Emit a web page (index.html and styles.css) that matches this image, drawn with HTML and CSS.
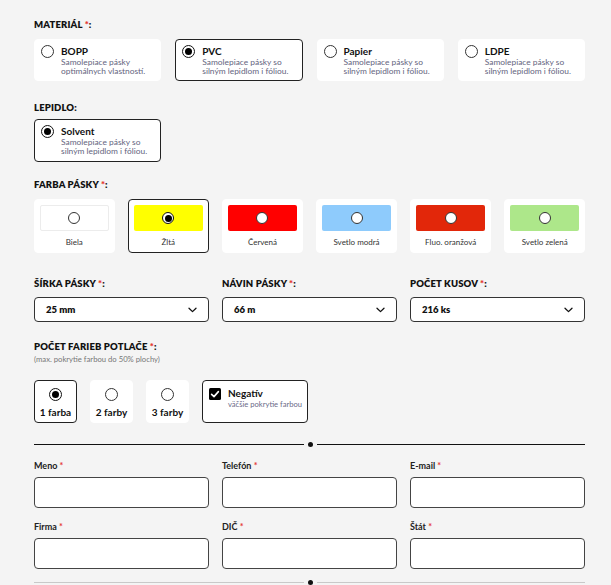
FILE: index.html
```html
<!DOCTYPE html>
<html lang="sk">
<head>
<meta charset="utf-8">
<title>Konfigurátor</title>
<link rel="stylesheet" href="styles.css">
</head>
<body>
<main class="page">
  <section class="group g-material">
    <div class="label">MATERIÁL <span class="req">*</span>:</div>
    <div class="grid4">
      <div class="opt"><span class="radio"></span><div class="opt-text"><div class="opt-title">BOPP</div><div class="opt-desc">Samolepiace pásky<br>optimálnych vlastností.</div></div></div>
      <div class="opt sel"><span class="radio on"></span><div class="opt-text"><div class="opt-title">PVC</div><div class="opt-desc">Samolepiace pásky so<br>silným lepidlom i fóliou.</div></div></div>
      <div class="opt"><span class="radio"></span><div class="opt-text"><div class="opt-title">Papier</div><div class="opt-desc">Samolepiace pásky so<br>silným lepidlom i fóliou.</div></div></div>
      <div class="opt"><span class="radio"></span><div class="opt-text"><div class="opt-title">LDPE</div><div class="opt-desc">Samolepiace pásky so<br>silným lepidlom i fóliou.</div></div></div>
    </div>
  </section>

  <section class="group g-lepidlo">
    <div class="label">LEPIDLO:</div>
    <div class="grid4">
      <div class="opt sel tall"><span class="radio on"></span><div class="opt-text"><div class="opt-title">Solvent</div><div class="opt-desc">Samolepiace pásky so<br>silným lepidlom i fóliou.</div></div></div>
    </div>
  </section>

  <section class="group g-farba">
    <div class="label">FARBA PÁSKY <span class="req">*</span>:</div>
    <div class="grid6">
      <div class="color"><div class="swatch c-white"><span class="radio"></span></div><div class="color-name">Biela</div></div>
      <div class="color sel"><div class="swatch c-yellow"><span class="radio on"></span></div><div class="color-name">Žltá</div></div>
      <div class="color"><div class="swatch c-red"><span class="radio"></span></div><div class="color-name">Červená</div></div>
      <div class="color"><div class="swatch c-blue"><span class="radio"></span></div><div class="color-name">Svetlo modrá</div></div>
      <div class="color"><div class="swatch c-orange"><span class="radio"></span></div><div class="color-name">Fluo. oranžová</div></div>
      <div class="color"><div class="swatch c-green"><span class="radio"></span></div><div class="color-name">Svetlo zelená</div></div>
    </div>
  </section>

  <section class="group g-selects">
    <div class="grid3">
      <div class="field">
        <div class="label">ŠÍRKA PÁSKY <span class="req">*</span>:</div>
        <div class="select"><span>25 mm</span><svg class="chev" viewBox="0 0 9 6" width="9" height="6"><path d="M1 1.2 L4.5 4.6 L8 1.2" fill="none" stroke="#111" stroke-width="1.3" stroke-linecap="round" stroke-linejoin="round"/></svg></div>
      </div>
      <div class="field">
        <div class="label">NÁVIN PÁSKY <span class="req">*</span>:</div>
        <div class="select"><span>66 m</span><svg class="chev" viewBox="0 0 9 6" width="9" height="6"><path d="M1 1.2 L4.5 4.6 L8 1.2" fill="none" stroke="#111" stroke-width="1.3" stroke-linecap="round" stroke-linejoin="round"/></svg></div>
      </div>
      <div class="field">
        <div class="label">POČET KUSOV <span class="req">*</span>:</div>
        <div class="select"><span>216 ks</span><svg class="chev" viewBox="0 0 9 6" width="9" height="6"><path d="M1 1.2 L4.5 4.6 L8 1.2" fill="none" stroke="#111" stroke-width="1.3" stroke-linecap="round" stroke-linejoin="round"/></svg></div>
      </div>
    </div>
  </section>

  <section class="group g-pocet">
    <div class="label">POČET FARIEB POTLAČE <span class="req">*</span>:</div>
    <div class="sublabel">(max. pokrytie farbou do 50% plochy)</div>
    <div class="counts">
      <div class="count sel"><span class="radio on"></span><span class="count-name">1 farba</span></div>
      <div class="count"><span class="radio"></span><span class="count-name">2 farby</span></div>
      <div class="count"><span class="radio"></span><span class="count-name">3 farby</span></div>
      <div class="neg sel">
        <span class="check"><svg viewBox="0 0 12 12" width="12" height="12"><path d="M2.6 6.3 L5 8.6 L9.4 3.6" fill="none" stroke="#fff" stroke-width="1.6" stroke-linecap="round" stroke-linejoin="round"/></svg></span>
        <div class="opt-text"><div class="opt-title">Negatív</div><div class="opt-desc">väčšie pokrytie farbou</div></div>
      </div>
    </div>
  </section>

  <div class="divider"><span class="dot"></span></div>

  <section class="contact grid3">
    <div class="field"><div class="flabel">Meno <span class="req">*</span></div><div class="input"></div></div>
    <div class="field"><div class="flabel">Telefón <span class="req">*</span></div><div class="input"></div></div>
    <div class="field"><div class="flabel">E-mail <span class="req">*</span></div><div class="input"></div></div>
    <div class="field"><div class="flabel">Firma <span class="req">*</span></div><div class="input"></div></div>
    <div class="field"><div class="flabel">DIČ <span class="req">*</span></div><div class="input"></div></div>
    <div class="field"><div class="flabel">Štát <span class="req">*</span></div><div class="input"></div></div>
  </section>

  <div class="divider light"><span class="dot"></span></div>
</main>
</body>
</html>
```
FILE: styles.css
```css
* { box-sizing: border-box; }
html, body { margin: 0; padding: 0; }
body {
  background: #f4f4f4;
  font-family: "Lato", "Noto Sans", sans-serif;
  color: #111;
  width: 611px;
  height: 585px;
  overflow: hidden;
}
.page {
  padding: 18px 26px 0 34px;
  display: flex;
  flex-direction: column;
}
.label {
  font-size: 9.5px;
  font-weight: 800;
  line-height: 14px;
  letter-spacing: 0.15px;
  color: #111;
}
.req { color: #e53935; }
.g-material .label, .g-farba .label { margin-bottom: 7px; }
.g-lepidlo .label { margin-bottom: 4px; }
.g-material { margin-bottom: 20px; }
.g-lepidlo { margin-bottom: 16px; }
.g-farba { margin-bottom: 24px; }
.g-selects { margin-bottom: 18px; }
.g-selects .label { margin-bottom: 6px; }

.grid4 { display: grid; grid-template-columns: repeat(4, 1fr); gap: 14px; }
.grid6 { display: grid; grid-template-columns: repeat(6, 1fr); gap: 13.6px; }
.grid3 { display: grid; grid-template-columns: repeat(3, 1fr); column-gap: 13px; }

.opt {
  background: #fff;
  border: 1px solid #fff;
  border-radius: 4px;
  height: 42px;
  padding: 5px 6px;
  display: flex;
  gap: 7px;
  align-items: flex-start;
}
.opt.tall { height: 43px; }
.sel { border: 1px solid #222 !important; }
.radio {
  flex: none;
  width: 13px;
  height: 13px;
  border: 1px solid #333;
  border-radius: 50%;
  background: #fff;
  display: inline-flex;
  align-items: center;
  justify-content: center;
}
.radio.on { border: 1.5px solid #111; }
.radio.on::after {
  content: "";
  width: 7px;
  height: 7px;
  border-radius: 50%;
  background: #000;
}
.opt-text { display: flex; flex-direction: column; white-space: nowrap; }
.opt-title { font-size: 10px; font-weight: 700; line-height: 13px; color: #111; }
.opt-desc { font-size: 8.4px; line-height: 9px; color: #64647e; }

.color {
  background: #fff;
  border: 1px solid #fff;
  border-radius: 4px;
  height: 54px;
  padding: 5px 5px 0;
  display: flex;
  flex-direction: column;
  align-items: stretch;
}
.swatch {
  height: 26px;
  border-radius: 2px;
  display: flex;
  align-items: center;
  justify-content: center;
}
.swatch .radio { width: 12px; height: 12px; }
.c-white { background: #fff; border: 1px solid #ececec; }
.c-yellow { background: #ffff00; }
.c-red { background: #ff0000; }
.c-blue { background: #8ecbfc; }
.c-orange { background: #e2270a; }
.c-green { background: #ade78a; }
.color-name {
  text-align: center;
  font-size: 8px;
  color: #333;
  margin-top: 6px;
  line-height: 10px;
}

.field { display: flex; flex-direction: column; }
.select {
  height: 25px;
  background: #fff;
  border: 1px solid #333;
  border-radius: 4px;
  padding: 0 11px 0 11px;
  display: flex;
  align-items: center;
  justify-content: space-between;
  font-size: 9.5px;
  font-weight: 800;
}
.chev { flex: none; }

.g-pocet .label { line-height: 14px; }
.sublabel { font-size: 7.7px; color: #777; line-height: 10px; margin-bottom: 16px; }
.counts { display: flex; gap: 13px; margin-bottom: 21px; }
.count {
  width: 43px;
  height: 43px;
  background: #fff;
  border: 1px solid #fff;
  border-radius: 4px;
  display: flex;
  flex-direction: column;
  align-items: center;
  padding-top: 7px;
  gap: 5px;
}
.count-name { font-size: 10px; font-weight: 700; line-height: 12px; white-space: nowrap; }
.neg {
  width: 106px;
  height: 43px;
  background: #fff;
  border-radius: 4px;
  display: flex;
  gap: 7px;
  padding: 6px 6px;
  align-items: flex-start;
}
.check {
  flex: none;
  width: 12px;
  height: 12px;
  background: #000;
  border-radius: 1.5px;
  margin-top: 1px;
  display: flex;
}
.neg .opt-desc { font-size: 7.6px; color: #6a6a88; }

.divider {
  position: relative;
  height: 1px;
  background: #111;
  margin-bottom: 15px;
}
.divider .dot {
  position: absolute;
  left: 274px;
  top: -2px;
  width: 5px;
  height: 5px;
  border-radius: 50%;
  background: #111;
  box-shadow: 0 0 0 4px #f4f4f4;
}
.divider.light { background: #c9c9c9; margin-bottom: 0; margin-top: 13px; }

.contact { row-gap: 13px; }
.flabel { font-size: 9px; font-weight: 700; line-height: 12px; color: #222; margin-bottom: 5px; }
.input {
  height: 31px;
  background: #fff;
  border: 1px solid #444;
  border-radius: 4px;
}
```
